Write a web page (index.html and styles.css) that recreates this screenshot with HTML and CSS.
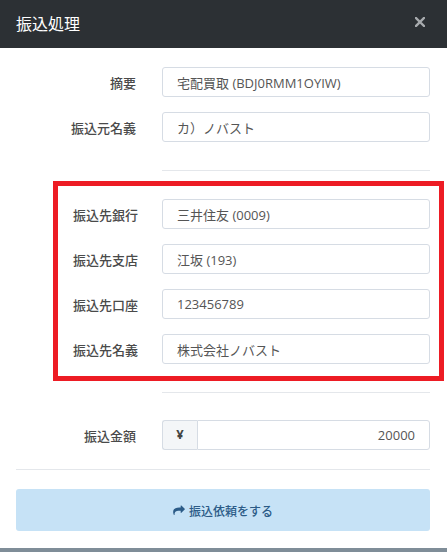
FILE: index.html
```html
<!DOCTYPE html>
<html lang="ja">
<head>
<meta charset="utf-8">
<title>振込処理</title>
<link rel="stylesheet" href="styles.css">
</head>
<body>
<div class="modal">
  <header class="modal-header">
    <h1 class="modal-title">振込処理</h1>
    <button class="close" type="button" aria-label="閉じる">
      <svg width="10" height="10" viewBox="0 0 10 10"><path d="M1 1L9 9M9 1L1 9" stroke="currentColor" stroke-width="2.4" stroke-linecap="square"/></svg>
    </button>
  </header>
  <div class="modal-body">
    <section class="group">
      <div class="row">
        <label class="label">摘要</label>
        <div class="field">宅配買取 (BDJ0RMM1OYIW)</div>
      </div>
      <div class="row">
        <label class="label">振込元名義</label>
        <div class="field">カ）ノバスト</div>
      </div>
    </section>
    <hr class="sep sep-short">
    <section class="group highlight">
      <div class="row">
        <label class="label">振込先銀行</label>
        <div class="field">三井住友 (0009)</div>
      </div>
      <div class="row">
        <label class="label">振込先支店</label>
        <div class="field">江坂 (193)</div>
      </div>
      <div class="row">
        <label class="label">振込先口座</label>
        <div class="field">123456789</div>
      </div>
      <div class="row">
        <label class="label">振込先名義</label>
        <div class="field">株式会社ノバスト</div>
      </div>
    </section>
    <hr class="sep sep-short sep-after-box">
    <section class="group amount-group">
      <div class="row">
        <label class="label">振込金額</label>
        <div class="input-group">
          <span class="addon">¥</span>
          <div class="field field-amount">20000</div>
        </div>
      </div>
    </section>
    <hr class="sep sep-full">
    <button class="btn-submit" type="button">
      <svg class="icon-share" width="12" height="10" viewBox="0 0 1792 1536"><path fill="currentColor" d="M1792 640q0 26-19 45l-512 512q-19 19-45 19t-45-19-19-45v-256h-224q-98 0-175.5 6t-154 21.5-133 42.5-105.5 69.5-80 101-48.5 138.5-17.5 181q0 55 5 123 0 6 2.5 23.5t2.5 26.5q0 15-8.5 25t-23.5 10q-16 0-28-17-7-9-13-22t-13.5-30-10.5-24q-127-285-127-451 0-199 53-333 162-403 875-403h224v-256q0-26 19-45t45-19 45 19l512 512q19 19 19 45z"/></svg>
      <span>振込依頼をする</span>
    </button>
  </div>
  <div class="bottom-bar"></div>
</div>
</body>
</html>
```
FILE: styles.css
```css
* { box-sizing: border-box; }
html, body { margin: 0; padding: 0; background: #fff; }
body {
  font-family: "Open Sans", "Noto Sans CJK JP", sans-serif;
  font-size: 13px;
  color: #555;
}
.modal { width: 447px; height: 552px; display: flex; flex-direction: column; }
.modal-header {
  height: 48px;
  background: #2c3034;
  display: flex;
  align-items: center;
  justify-content: space-between;
  padding: 0 22px 0 16px;
}
.modal-title {
  margin: 0;
  font-family: "Noto Sans CJK JP", sans-serif;
  font-size: 16px;
  font-weight: 400;
  color: #fff;
  line-height: 1;
  padding-bottom: 2px;
}
.close {
  border: 0;
  background: none;
  padding: 0;
  color: #a8abae;
  display: flex;
  margin-top: -5px;
}
.modal-body {
  flex: 1;
  padding: 19px 17px 0 16px;
  display: flex;
  flex-direction: column;
}
.group { display: flex; flex-direction: column; gap: 15px; }
.row {
  display: grid;
  grid-template-columns: 120px 1fr;
  column-gap: 26px;
  align-items: center;
}
.label {
  text-align: right;
  font-family: "Noto Sans CJK JP", sans-serif;
  font-weight: 500;
  color: #4a4a4a;
  font-size: 13px;
}
.field {
  height: 30px;
  border: 1px solid #d6dce4;
  border-radius: 3px;
  padding: 0 14px;
  display: flex;
  align-items: center;
  color: #555;
  background: #fff;
}
.sep { border: 0; border-top: 1px solid #e4e7eb; margin: 0; }
.sep-short { margin-left: 146px; margin-top: 28px; }
.sep-after-box { margin-top: 11px; }
.highlight {
  margin: 10px -14px 0 37px;
  border: 5px solid #ed1c24;
  padding: 13px 9px 12px 15px;
  gap: 15px;
}
.highlight .row { grid-template-columns: 63px 1fr; column-gap: 26px; }
.highlight .label { text-align: left; white-space: nowrap; }
.amount-group { margin-top: 27px; }
.input-group { display: flex; height: 30px; }
.addon {
  width: 35px;
  border: 1px solid #d6dce4;
  border-right: 0;
  border-radius: 3px 0 0 3px;
  background: #f4f6f8;
  display: flex;
  align-items: center;
  justify-content: center;
  font-weight: 700;
  color: #444;
  padding-bottom: 2px;
}
.field-amount {
  flex: 1;
  justify-content: flex-end;
  border-radius: 0 3px 3px 0;
  padding-right: 14px;
}
.sep-full { margin-top: 19px; }
.btn-submit {
  margin-top: 19px;
  height: 42px;
  border: 0;
  border-radius: 3px;
  background: #c6e2f6;
  color: #2b5b87;
  font-family: "Noto Sans CJK JP", sans-serif;
  font-size: 12px;
  font-weight: 500;
  display: flex;
  align-items: center;
  justify-content: center;
  gap: 4px;
  padding: 0;
}
.icon-share { margin-top: -1px; }
.bottom-bar { height: 4px; background: #7f8d98; }
```
